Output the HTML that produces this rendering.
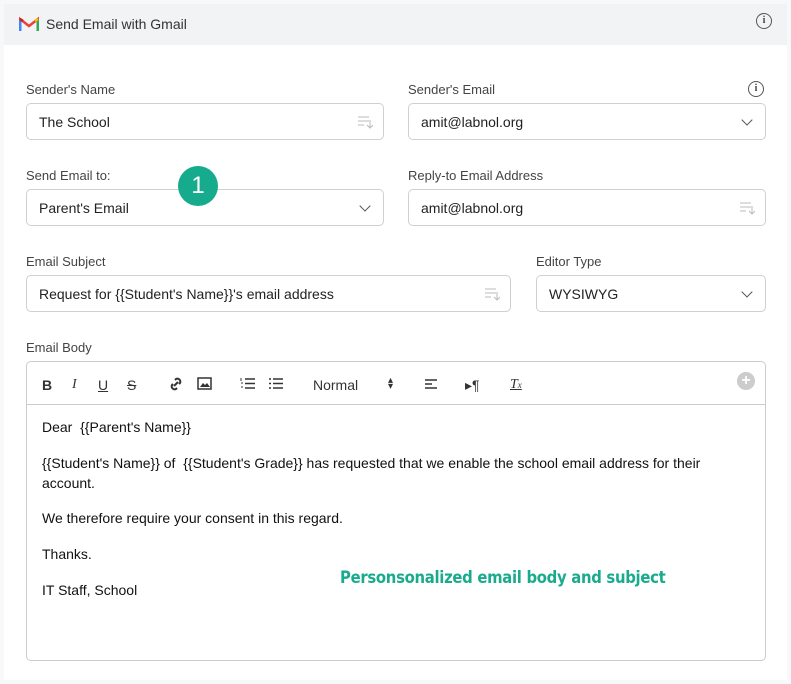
<!DOCTYPE html>
<html><head><style>
*{box-sizing:border-box;margin:0;padding:0}
body{width:791px;height:684px;background:#f7f8f9;font-family:"Liberation Sans",Arial,sans-serif;position:relative;overflow:hidden;color:#222}
.hdr{position:absolute;left:4px;top:4px;width:783px;height:41px;background:#f1f3f4}
.hdr .t{position:absolute;left:42px;top:12px;font-size:14px;color:#333}
.panel{position:absolute;left:4px;top:45px;width:783px;height:635px;background:#fff}
.lbl{position:absolute;font-size:13px;color:#444}
.in{position:absolute;height:37px;border:1px solid #d0d0d0;border-radius:5px;background:#fff;font-size:14px;color:#222;padding:10px 12px}
.chev{position:absolute;right:14px;top:12px;width:8px;height:8px;border-right:1.5px solid #555;border-bottom:1.5px solid #555;transform:rotate(45deg)}
.lst{position:absolute;right:10px;top:11px}
.info{position:absolute;width:16px;height:16px;border:1.3px solid #555;border-radius:50%;font:bold 10px "Liberation Serif",serif;text-align:center;line-height:14px;color:#444}
.tb{position:absolute;font-size:14px;color:#333;top:377px}
.body p{position:absolute;left:42px;font-size:14px;color:#111}
</style></head><body>
<div class="hdr">
<svg style="position:absolute;left:15px;top:12px" width="20" height="16" viewBox="0 0 20 16"><path d="M1 15V3l9 7 9-7v12" fill="none" stroke="#ea4335" stroke-width="2.5"/><path d="M1 15V4" stroke="#4285f4" stroke-width="3"/><path d="M19 15V4" stroke="#34a853" stroke-width="3"/><path d="M1 3l3 2" stroke="#c5221f" stroke-width="2.5"/><path d="M16 5l3-2" stroke="#fbbc04" stroke-width="2.5"/></svg>
<div class="t">Send Email with Gmail</div>
<div class="info" style="left:752px;top:9px">i</div>
</div>
<div class="panel"></div>

<div class="lbl" style="left:26px;top:82px">Sender's Name</div>
<div class="in" style="left:26px;top:103px;width:358px">The School<svg class="lst" width="16" height="14"><path d="M1 2h11M1 6h11M1 10h6M13 5v8M10 10l3 3 3-3" stroke="#bbb" fill="none"/></svg></div>
<div class="lbl" style="left:408px;top:82px">Sender's Email</div>
<div class="info" style="left:748px;top:81px">i</div>
<div class="in" style="left:408px;top:103px;width:358px">amit@labnol.org<div class="chev"></div></div>

<div class="lbl" style="left:26px;top:168px">Send Email to:</div>
<div class="in" style="left:26px;top:189px;width:358px">Parent's Email<div class="chev"></div></div>
<div class="lbl" style="left:408px;top:168px">Reply-to Email Address</div>
<div class="in" style="left:408px;top:189px;width:358px">amit@labnol.org<svg class="lst" width="16" height="14"><path d="M1 2h11M1 6h11M1 10h6M13 5v8M10 10l3 3 3-3" stroke="#bbb" fill="none"/></svg></div>
<div style="position:absolute;left:178px;top:166px;width:40px;height:40px;border-radius:50%;background:#17ab8e;color:#fff;font-size:24px;text-align:center;line-height:40px">1</div>

<div class="lbl" style="left:26px;top:254px">Email Subject</div>
<div class="in" style="left:26px;top:275px;width:485px">Request for {{Student's Name}}'s email address<svg class="lst" width="16" height="14"><path d="M1 2h11M1 6h11M1 10h6M13 5v8M10 10l3 3 3-3" stroke="#bbb" fill="none"/></svg></div>
<div class="lbl" style="left:536px;top:254px">Editor Type</div>
<div class="in" style="left:536px;top:275px;width:230px">WYSIWYG<div class="chev"></div></div>

<div class="lbl" style="left:26px;top:340px">Email Body</div>
<div style="position:absolute;left:26px;top:361px;width:740px;height:300px;border:1px solid #ccc;border-radius:5px"></div>
<div style="position:absolute;left:27px;top:404px;width:738px;height:1px;background:#ccc"></div>
<div class="tb" style="left:42px;font-weight:bold">B</div>
<div class="tb" style="left:72px;font-style:italic;font-family:'Liberation Serif'">I</div>
<div class="tb" style="left:98px;text-decoration:underline">U</div>
<div class="tb" style="left:127px;text-decoration:line-through">S</div>
<svg style="position:absolute;left:168px;top:376px" width="16" height="16" viewBox="0 0 16 16"><path d="M6 10l4-4M7 4l1-1a3 3 0 014 4l-1 1M9 12l-1 1a3 3 0 01-4-4l1-1" stroke="#333" stroke-width="2" fill="none"/></svg>
<svg style="position:absolute;left:197px;top:377px" width="15" height="13"><rect x="1" y="1" width="13" height="11" fill="none" stroke="#333" stroke-width="1.5"/><path d="M3 10l3-4 2 2 2-2 3 4z" fill="#333"/></svg>
<svg style="position:absolute;left:240px;top:377px" width="16" height="13"><path d="M5 2h10M5 6.5h10M5 11h10" stroke="#333" stroke-width="1.6"/><path d="M1 1v3M1 6h2M1 10h2" stroke="#333"/></svg>
<svg style="position:absolute;left:268px;top:377px" width="16" height="13"><path d="M5 2h10M5 6.5h10M5 11h10M1 2h2M1 6.5h2M1 11h2" stroke="#333" stroke-width="1.6"/></svg>
<div class="tb" style="left:313px">Normal</div>
<div class="tb" style="left:388px;font-size:10px;top:378px;line-height:6px">▴<br>▾</div>
<svg style="position:absolute;left:424px;top:378px" width="14" height="12"><path d="M1 2h12M1 6h7M1 10h12" stroke="#333" stroke-width="1.6"/></svg>
<div class="tb" style="left:465px">▸¶</div>
<div class="tb" style="left:510px;font-style:italic;text-decoration:underline;font-family:'Liberation Serif'">T<span style="font-size:9px">x</span></div>
<div style="position:absolute;left:737px;top:372px;width:18px;height:18px;border-radius:50%;background:#ccc;color:#fff;font:bold 16px/18px sans-serif;text-align:center">+</div>

<div class="body">
<p style="top:419px">Dear &nbsp;{{Parent's Name}}</p>
<p style="top:455px">{{Student's Name}} of &nbsp;{{Student's Grade}} has requested that we enable the school email address for their</p>
<p style="top:475px">account.</p>
<p style="top:510px">We therefore require your consent in this regard.</p>
<p style="top:546px">Thanks.</p>
<p style="top:582px">IT Staff, School</p>
</div>
<div style="position:absolute;left:340px;top:568px;font:bold 16.5px 'DejaVu Sans Condensed',sans-serif;color:#1aab8e;letter-spacing:-0.3px">Personsonalized email body and subject</div>
</body></html>
